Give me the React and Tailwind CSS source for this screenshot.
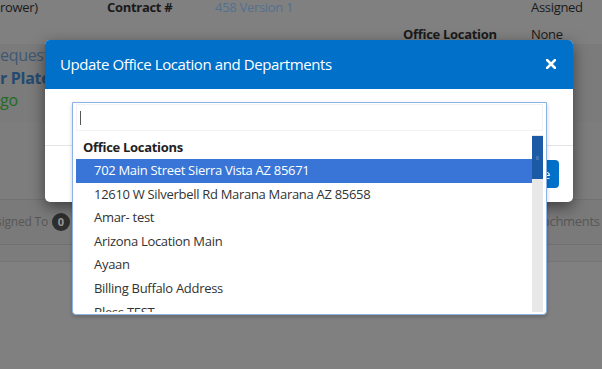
import React from "react";

const items = [
  "702 Main Street Sierra Vista AZ 85671",
  "12610 W Silverbell Rd Marana Marana AZ 85658",
  "Amar- test",
  "Arizona Location Main",
  "Ayaan",
  "Billing Buffalo Address",
  "Bless TEST",
];

export default function App() {
  return (
    <div className="relative w-[602px] h-[369px] overflow-hidden bg-[#808080] font-['Open_Sans',sans-serif] text-[13px] tracking-[-0.3px] text-[#1a1a1a]">
      {/* page behind overlay */}
      <div className="flex h-[14px] leading-[14px] whitespace-nowrap">
        <div className="w-[107px]">rower)</div>
        <div className="w-[108px] font-bold">Contract #</div>
        <div className="w-[316px] text-[#54708f]">458 Version 1</div>
        <div>Assigned</div>
      </div>
      <div className="flex mt-[11px] h-[18px] leading-[18px] whitespace-nowrap">
        <div className="w-[403px]" />
        <div className="w-[128px] font-bold">Office Location</div>
        <div>None</div>
      </div>
      <div className="mt-[1px] bg-[#7b7b7b] h-[78px] text-[16px] leading-[22.5px] whitespace-nowrap">
        <div className="text-[#3f5874]">equest</div>
        <div className="font-bold text-[#244a70]">r Plate</div>
        <div className="text-[#226b22]">go</div>
      </div>
      <div className="h-[78px] bg-[#7d7d7d] border-b border-[#727272]" />
      <div className="h-[45px] bg-[#7a7a7a] border-b border-[#707070] flex items-center text-[13px] text-[#575757] whitespace-nowrap">
        <div className="w-[70px] shrink-0 flex items-center justify-end">
          <span className="text-[12px] tracking-[-0.2px]">ssigned To</span>
          <span className="ml-[4px] w-[18px] h-[18px] shrink-0 rounded-full bg-[#2e2e2e] text-[#9a9a9a] text-[11px] font-bold flex items-center justify-center tracking-normal">0</span>
        </div>
        <div className="ml-[456px]">Attachments (0)</div>
      </div>
      <div className="h-[17px] bg-[#7c7c7c] border-b border-[#747474]" />

      {/* modal */}
      <div className="absolute left-[45px] top-[40px] w-[528px] rounded-[5px] overflow-hidden bg-white shadow-[0_5px_15px_rgba(0,0,0,0.5)]">
        <div className="h-[49px] bg-[#0070c9] pl-[15px] pr-[17px] flex items-center justify-between">
          <div className="text-white text-[15px] tracking-[-0.4px] leading-[20px] -mt-[1px]">Update Office Location and Departments</div>
          <svg width="10" height="10" viewBox="0 0 10 10" className="-mt-[2px]">
            <path d="M1 1 L9 9 M9 1 L1 9" stroke="white" strokeWidth="2.6" strokeLinecap="square" />
          </svg>
        </div>
        <div className="h-[56px]" />
        <div className="h-[57px] border-t border-[#e5e5e5] flex items-start justify-end pr-[14px] pt-[14px]">
          <button className="h-[28px] px-[9px] rounded-[4px] bg-[#0070c9] text-white text-[13px] leading-[28px]">Save</button>
        </div>
      </div>

      {/* dropdown */}
      <div className="absolute left-[72px] top-[102px] w-[475px] h-[213px] bg-white border border-[#8db2e8] rounded-b-[4px] shadow-[0_2px_4px_rgba(0,0,0,0.2)] flex flex-col">
        <div className="mx-[3px] mt-[1px] h-[27px] border border-[#f2f2f2] flex items-center pl-[3px]">
          <div className="w-[1px] h-[14px] bg-[#555]" />
        </div>
        <div className="mt-[4px] h-[177px] px-[3px] flex">
          <div className="flex-1 overflow-hidden text-[13px]">
            <div className="h-[24px] leading-[24px] pl-[7px] font-bold text-[#222]">Office Locations</div>
            {items.map((t, i) => (
              <div
                key={t}
                className={
                  "h-[23.6px] leading-[23.6px] pl-[18px] whitespace-nowrap " +
                  (i === 0 ? "bg-[#3875d7] text-white" : "text-[#333]")
                }
              >
                {t}
              </div>
            ))}
          </div>
          <div className="w-[11px] bg-[#e8e8e8] flex flex-col">
            <div className="mt-[1px] h-[43px] bg-[#1c5aa6] flex items-center justify-center">
              <div className="w-[3px] h-[4px] bg-[#3f72b4]" />
            </div>
          </div>
        </div>
      </div>
    </div>
  );
}
